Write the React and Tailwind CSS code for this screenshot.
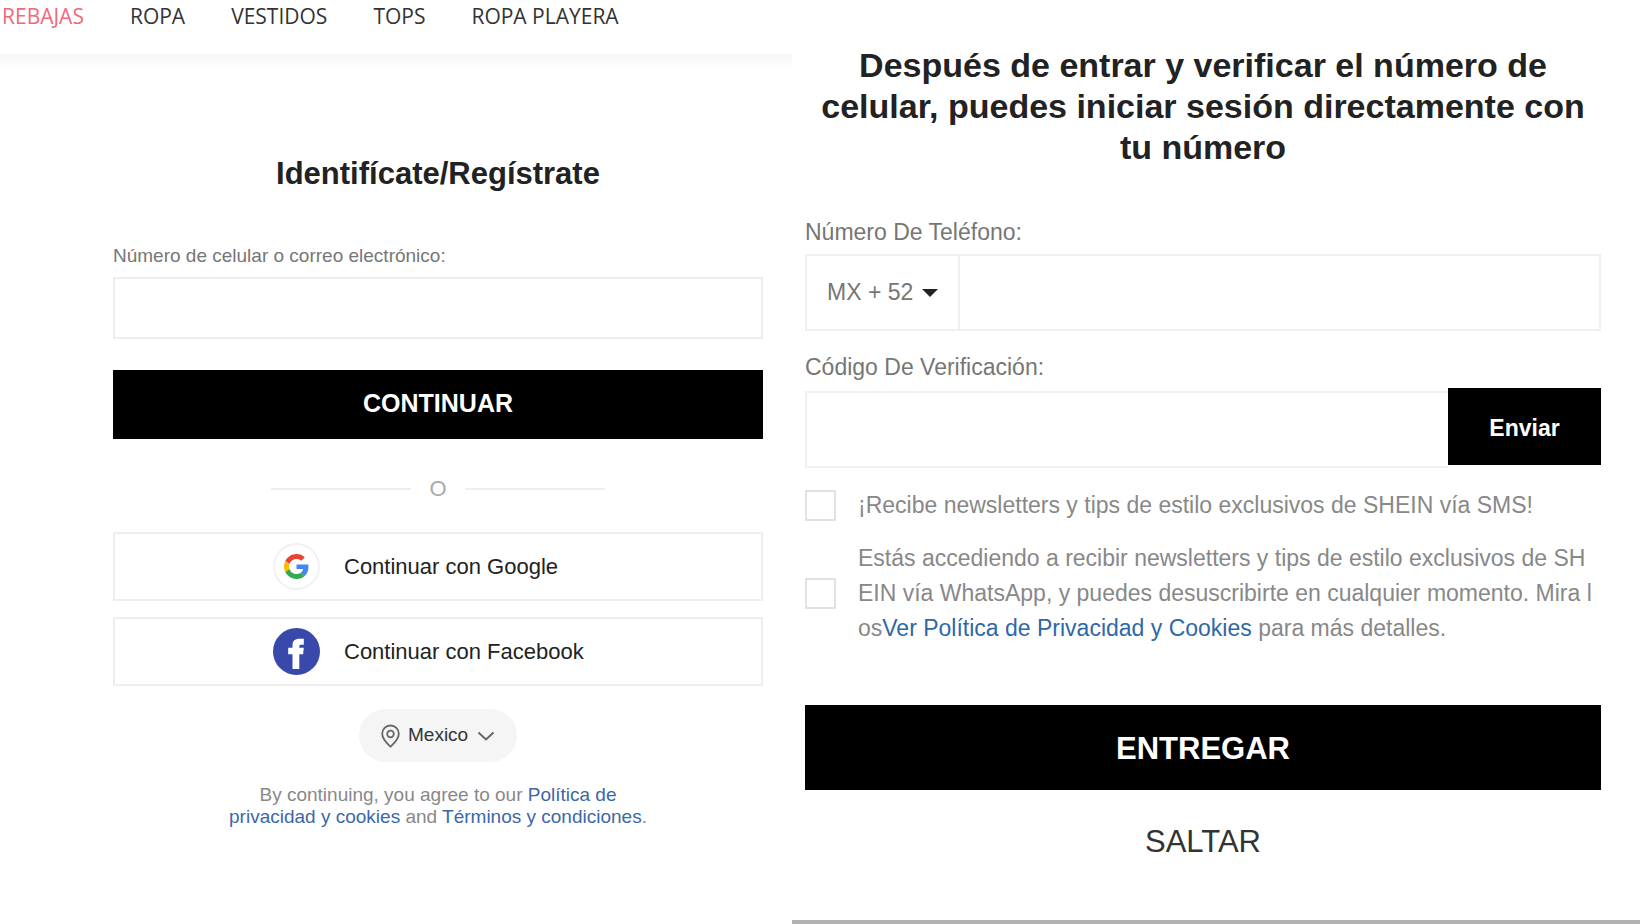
import React, { useState } from "react";

const navItems = ["ROPA", "VESTIDOS", "TOPS", "ROPA PLAYERA"];

const GoogleIcon = () => (
  <svg viewBox="0 0 48 48" className="size-[25px]" aria-hidden="true">
    <path fill="#EA4335" d="M24 9.5c3.54 0 6.71 1.22 9.21 3.6l6.85-6.85C35.9 2.38 30.47 0 24 0 14.62 0 6.51 5.38 2.56 13.22l7.98 6.19C12.43 13.72 17.74 9.5 24 9.5z" />
    <path fill="#4285F4" d="M46.98 24.55c0-1.57-.15-3.09-.38-4.55H24v9.02h12.94c-.58 2.96-2.26 5.48-4.78 7.18l7.73 6c4.51-4.18 7.09-10.36 7.09-17.65z" />
    <path fill="#FBBC05" d="M10.53 28.59c-.48-1.45-.76-2.99-.76-4.59s.27-3.14.76-4.59l-7.98-6.19C.92 16.46 0 20.12 0 24c0 3.88.92 7.54 2.56 10.78l7.97-6.19z" />
    <path fill="#34A853" d="M24 48c6.48 0 11.93-2.13 15.89-5.81l-7.73-6c-2.15 1.45-4.92 2.3-8.16 2.3-6.26 0-11.57-4.22-13.47-9.91l-7.98 6.19C6.51 42.62 14.62 48 24 48z" />
  </svg>
);

const FacebookIcon = () => (
  <svg viewBox="0 0 47 47" className="size-[47px] shrink-0" aria-hidden="true">
    <circle cx="23.5" cy="23.5" r="23.5" fill="#3949ab" />
    <path fill="#fff" d="M19.500 41V26.200h-4.300v-6.400h4.300v-2.600c0-4.400 2.700-6.500 6.700-6.500h4.600v6h-2.600c-1.500 0-1.900.6-1.900 1.900v1.200h4.500l-.7 6.400h-3.800V41z" />
  </svg>
);

const PinIcon = () => (
  <svg viewBox="0 0 19 24" className="h-6 w-[19px]" fill="none" stroke="#666" strokeWidth="1.8" aria-hidden="true">
    <path d="M9.500 22.600C6.500 19.800 1.200 15.500 1.200 9.800a8.300 8.300 0 0 1 16.600 0c0 5.700-5.300 10-8.300 12.800z" />
    <circle cx="9.5" cy="10" r="3.300" />
  </svg>
);

const ChevronIcon = () => (
  <svg viewBox="0 0 18 12" className="h-3 w-[18px]" fill="none" stroke="#666" strokeWidth="2" aria-hidden="true">
    <path d="M1.500 2.500 9 9.500 16.500 2.500" />
  </svg>
);

const LoginPanel = () => {
  const [account, setAccount] = useState("");

  return (
    <section className="flex flex-col">
      <nav className="flex gap-[46px] pl-[2px] pb-[22px] font-['Open_Sans',sans-serif] text-[21px] leading-8 whitespace-nowrap text-[#333]">
        <a href="#rebajas" className="text-[#f0697a]">REBAJAS</a>
        {navItems.map((item) => (
          <a key={item} href="#categoria">{item}</a>
        ))}
      </nav>
      <div className="h-4 bg-linear-to-b from-[#f6f6f6] to-white" />

      <form className="flex flex-col pl-[113px] pr-[29px]" onSubmit={(e) => e.preventDefault()}>
        <h1 className="mt-[84px] text-center text-[31px] leading-10 font-bold text-[#222]">
          Identifícate/Regístrate
        </h1>

        <label htmlFor="account" className="mt-[50px] text-[19px] leading-6 text-[#767676]">
          Número de celular o correo electrónico:
        </label>
        <input
          id="account"
          type="text"
          value={account}
          onChange={(e) => setAccount(e.target.value)}
          className="mt-[9px] h-[62px] border-2 border-[#eee] px-4 text-[19px] outline-none"
        />
        <button type="submit" className="mt-[31px] h-[69px] bg-black pb-[2px] text-[25px] font-bold text-white">
          CONTINUAR
        </button>

        <div className="mt-9 flex items-center justify-center gap-[18px] text-[22px] leading-7 text-[#aaa]">
          <span className="h-[2px] w-[140px] bg-[#eee]" />
          O
          <span className="h-[2px] w-[140px] bg-[#eee]" />
        </div>

        <div className="mt-[29px] flex flex-col gap-4">
          <button type="button" className="flex h-[69px] items-center gap-6 border-2 border-[#eee] pl-[158px] text-[22px] text-[#222]">
            <span className="flex size-[47px] shrink-0 items-center justify-center rounded-full border-2 border-[#f1f1f1]">
              <GoogleIcon />
            </span>
            Continuar con Google
          </button>
          <button type="button" className="flex h-[69px] items-center gap-6 border-2 border-[#eee] pl-[158px] text-[22px] text-[#222]">
            <FacebookIcon />
            Continuar con Facebook
          </button>
        </div>

        <div className="mt-[23px] flex h-[53px] items-center gap-2 self-center rounded-full bg-[#f5f5f5] px-[22px]">
          <PinIcon />
          <select aria-label="País" className="appearance-none bg-transparent text-[19px] text-[#333] outline-none">
            <option>Mexico</option>
          </select>
          <ChevronIcon />
        </div>

        <p className="mt-[22px] w-[430px] self-center text-center text-[19px] leading-[22px] text-[#888]">
          By continuing, you agree to our{" "}
          <a href="#privacidad" className="text-[#3c67a8]">Política de privacidad y cookies</a> and{" "}
          <a href="#terminos" className="text-[#3c67a8]">Términos y condiciones</a>.
        </p>
      </form>
    </section>
  );
};

const VerifyPanel = () => {
  const [phone, setPhone] = useState("");
  const [code, setCode] = useState("");

  return (
    <section className="flex flex-col">
      <form className="flex flex-col pt-[45px] pl-[13px] pr-[39px]" onSubmit={(e) => e.preventDefault()}>
        <h2 className="text-center text-[34px] leading-[41px] font-bold text-[#222]">
          Después de entrar y verificar el número de celular, puedes iniciar sesión directamente con tu número
        </h2>

        <label htmlFor="phone" className="mt-[50px] text-[23px] leading-7 text-[#767676]">
          Número De Teléfono:
        </label>
        <div className="mt-2 flex h-[77px] border-2 border-[#f0f0f0]">
          <div className="flex w-[153px] items-center gap-2 border-r-2 border-[#f0f0f0] pl-5">
            <select aria-label="Código de país" className="appearance-none text-[23px] text-[#767676] outline-none">
              <option>MX + 52</option>
            </select>
            <svg viewBox="0 0 16 8" className="h-2 w-4" aria-hidden="true">
              <path d="M0 0h16L8 8z" fill="#222" />
            </svg>
          </div>
          <input
            id="phone"
            type="tel"
            value={phone}
            onChange={(e) => setPhone(e.target.value)}
            className="min-w-0 flex-1 px-4 text-[23px] outline-none"
          />
        </div>

        <label htmlFor="code" className="mt-[22px] text-[23px] leading-7 text-[#767676]">
          Código De Verificación:
        </label>
        <div className="mt-[7px] flex items-start">
          <input
            id="code"
            type="text"
            value={code}
            onChange={(e) => setCode(e.target.value)}
            className="mt-[3px] h-[77px] min-w-0 flex-1 border-2 border-r-0 border-[#f0f0f0] px-4 text-[23px] outline-none"
          />
          <button type="button" className="h-[77px] w-[153px] bg-black pt-1 text-[23px] font-bold text-white">
            Enviar
          </button>
        </div>

        <div className="mt-5 flex items-center gap-[22px] text-[23px] leading-[35px] text-[#888]">
          <input id="sms" type="checkbox" className="size-[31px] shrink-0 appearance-none border-2 border-[#e2e2e2] checked:bg-black" />
          <label htmlFor="sms">¡Recibe newsletters y tips de estilo exclusivos de SHEIN vía SMS!</label>
        </div>
        <div className="mt-[18px] flex items-center gap-[22px] pr-1 text-[23px] leading-[35px] text-[#888]">
          <input id="whatsapp" type="checkbox" className="size-[31px] shrink-0 appearance-none border-2 border-[#e2e2e2] checked:bg-black" />
          <label htmlFor="whatsapp" className="break-all">
            Estás accediendo a recibir newsletters y tips de estilo exclusivos de SHEIN vía WhatsApp, y puedes
            desuscribirte en cualquier momento. Mira los
            <a href="#privacidad" className="text-[#2d68a8]">Ver Política de Privacidad y Cookies</a> para más detalles.
          </label>
        </div>

        <button type="submit" className="mt-[59px] h-[85px] bg-black pt-1 text-[31px] font-bold text-white">
          ENTREGAR
        </button>
        <button type="button" className="mt-8 self-center text-[31px] leading-10 text-[#333]">
          SALTAR
        </button>
      </form>
      <div className="mt-auto h-1 bg-[#b2b2b2]" />
    </section>
  );
};

const App = () => (
  <main className="grid min-h-screen grid-cols-[99fr_106fr] bg-white font-['Liberation_Sans',Arial,sans-serif]">
    <LoginPanel />
    <VerifyPanel />
  </main>
);

export default App;
